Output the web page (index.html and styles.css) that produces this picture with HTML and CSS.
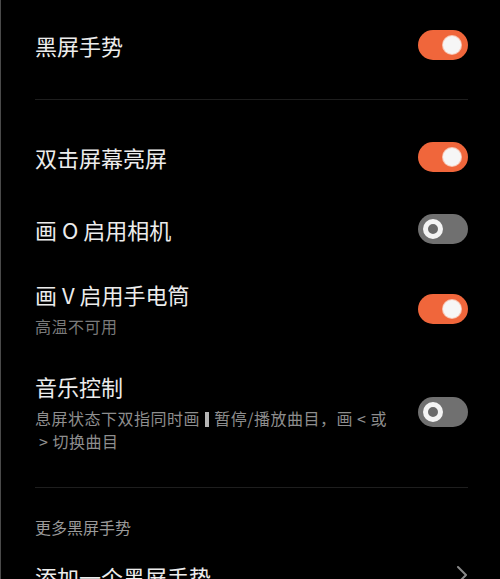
FILE: index.html
```html
<!DOCTYPE html>
<html lang="zh-CN">
<head>
<meta charset="utf-8">
<title>黑屏手势</title>
<link rel="stylesheet" href="styles.css">
</head>
<body>
<div class="screen">
  <div class="row row-top">
    <div class="text"><div class="title">黑屏手势</div></div>
    <span class="switch on"></span>
  </div>
  <div class="divider first"></div>
  <div class="row">
    <div class="text"><div class="title">双击屏幕亮屏</div></div>
    <span class="switch on"></span>
  </div>
  <div class="row">
    <div class="text"><div class="title">画 O 启用相机</div></div>
    <span class="switch off"></span>
  </div>
  <div class="row multi">
    <div class="text">
      <div class="title">画 V 启用手电筒</div>
      <div class="sub dim">高温不可用</div>
    </div>
    <span class="switch on"></span>
  </div>
  <div class="row multi">
    <div class="text">
      <div class="title">音乐控制</div>
      <div class="sub">息屏状态下双指同时画 <span class="bar"></span> 暂停/播放曲目，画 &lt; 或<br>&nbsp;&gt; 切换曲目</div>
    </div>
    <span class="switch off"></span>
  </div>
  <div class="divider second"></div>
  <div class="section">更多黑屏手势</div>
  <div class="row link">
    <div class="text"><div class="title">添加一个黑屏手势</div></div>
    <svg class="chev" width="12" height="20" viewBox="0 0 12 20"><path d="M2 2 L10 10 L2 18" fill="none" stroke="#8a8a8a" stroke-width="2" stroke-linecap="round" stroke-linejoin="round"/></svg>
  </div>
</div>
</body>
</html>
```
FILE: styles.css
```css
html, body {
  margin: 0;
  padding: 0;
  background: #000;
}
body {
  font-family: "Noto Sans CJK SC", "Noto Sans", sans-serif;
  color: #ececec;
  height: 579px;
  overflow: hidden;
}
.screen {
  border-left: 1px solid #4a4a4a;
  padding: 0 32px 0 34px;
  height: 579px;
  box-sizing: border-box;
}
.row {
  display: flex;
  align-items: center;
  justify-content: space-between;
  gap: 20px;
  padding: 21px 0;
}
.row-top {
  padding: 30px 0 30px;
}
.row.multi {
  padding: 14px 0 19px;
}
.row.link {
  padding: 22px 0 0;
  align-items: flex-start;
}
.text {
  flex: 1;
  min-width: 0;
}
.title {
  font-size: 22px;
  line-height: 30px;
  color: #ececec;
}
.sub {
  margin-top: 6px;
  font-size: 16px;
  line-height: 23px;
  letter-spacing: 0.5px;
  color: #8e8e8e;
  white-space: nowrap;
}
.sub.dim {
  color: #7a7a7a;
}
.bar {
  display: inline-block;
  width: 4px;
  height: 15px;
  background: #b5b5b5;
  vertical-align: -2px;
  margin: 0 1px;
}
.switch {
  position: relative;
  flex: none;
  width: 50px;
  height: 30px;
  border-radius: 15px;
}
.switch.on {
  background: #f0663b;
}
.switch.off {
  background: #707070;
}
.switch::after {
  content: "";
  position: absolute;
  top: 50%;
  border-radius: 50%;
  box-sizing: border-box;
}
.switch.on::after {
  right: 7px;
  width: 18px;
  height: 18px;
  margin-top: -9px;
  background: #f6f6f6;
  box-shadow: 0 0 0 1px #f7c7b5;
}
.switch.off::after {
  left: 5px;
  width: 20px;
  height: 20px;
  margin-top: -10px;
  border: 5px solid #f4f4f4;
  background: #6a6a6a;
}
.divider {
  height: 1px;
  background: #1e1e1e;
}
.divider.first {
  margin-top: 9px;
  margin-bottom: 21px;
}
.divider.second {
  margin-top: 15px;
}
.section {
  font-size: 16px;
  line-height: 24px;
  color: #9a9a9a;
  padding-top: 27px;
}
.chev {
  margin-top: 4px;
  margin-right: 0;
}
```
